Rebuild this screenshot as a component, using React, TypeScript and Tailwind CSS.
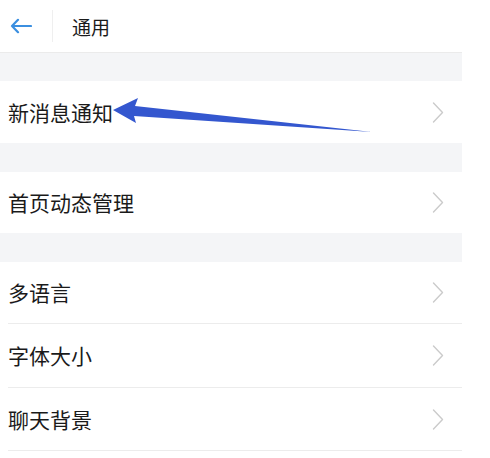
import React from 'react';

const font = { fontFamily: '"Noto Sans CJK SC", "Noto Sans", sans-serif' };

const Chevron: React.FC = () => (
  <svg width="12" height="21" viewBox="0 0 12 21" fill="none">
    <polyline points="1.5,1 10.5,10.5 1.5,20" stroke="#cbcbcb" strokeWidth="1.4" strokeLinecap="round" strokeLinejoin="round" />
  </svg>
);

const Row: React.FC<{ label: string; h?: string }> = ({ label, h = 'h-[62px]' }) => (
  <div className={`${h} flex items-center justify-between pl-[8px] pr-[18px] bg-white`}>
    <span className="text-[21px] text-[#1a1a1a] leading-none">{label}</span>
    <Chevron />
  </div>
);

const Sep: React.FC = () => <div className="ml-[8px] h-px bg-[#ececec]" />;

const Band: React.FC<{ h: string }> = ({ h }) => <div className={`${h} bg-[#f4f5f7]`} />;

export default function App() {
  return (
    <div className="relative w-[490px] h-[458px] bg-white overflow-hidden" style={font}>
      <div className="w-[462px]">
        {/* Header */}
        <div className="h-[53px] flex items-center border-b border-[#ebebeb] bg-white">
          <div className="w-[52px] pl-[10px] flex items-center">
            <svg width="22" height="16" viewBox="0 0 22 16" fill="none">
              <path d="M21 8H2M8 1.8L2 8l6 6.2" stroke="#3b8fe0" strokeWidth="2.2" strokeLinecap="round" strokeLinejoin="round" />
            </svg>
          </div>
          <div className="w-px h-[32px] bg-[#efefef]" />
          <span className="ml-[19px] text-[19px] text-[#1a1a1a] leading-none">通用</span>
        </div>

        <Band h="h-[28px]" />
        <Row label="新消息通知" />
        <Band h="h-[29px]" />
        <Row label="首页动态管理" h="h-[61px]" />
        <Band h="h-[29px]" />
        <Row label="多语言" h="h-[61px]" />
        <Sep />
        <Row label="字体大小" h="h-[63px]" />
        <Sep />
        <Row label="聊天背景" />
        <Sep />
      </div>

      {/* annotation arrow */}
      <svg className="absolute left-0 top-0 pointer-events-none" width="490" height="458" viewBox="0 0 490 458">
        <polygon points="113,110 138,98 135,106 372,132 134,116 136,123" fill="#3457cf" />
      </svg>
    </div>
  );
}
